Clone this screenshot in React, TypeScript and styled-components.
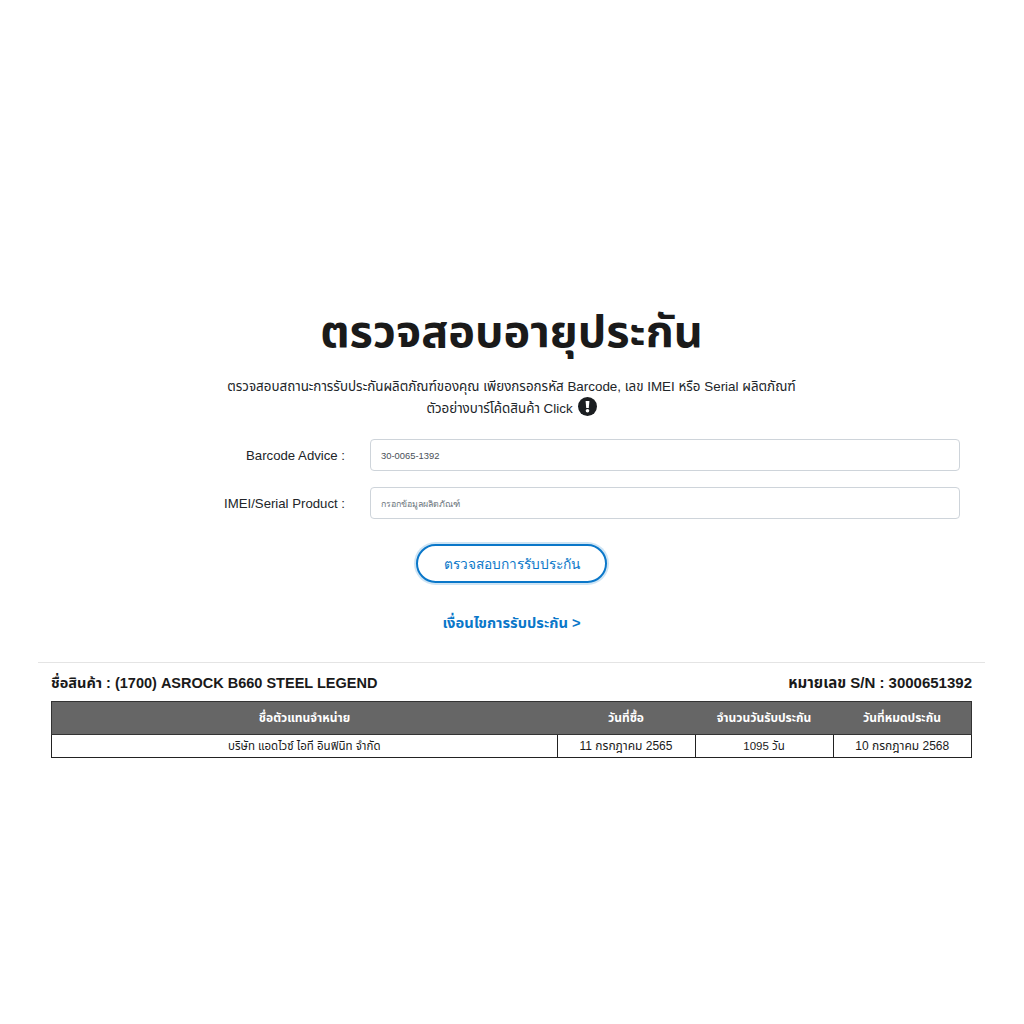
import React from 'react';
import styled, { createGlobalStyle } from 'styled-components';

const Global = createGlobalStyle`
  html, body { margin: 0; padding: 0; background: #fff; }
  body { font-family: "Liberation Sans", "Noto Sans", "Noto Sans Thai", sans-serif; color: #212529; }
`;

const Page = styled.div`
  width: 1024px;
  height: 1024px;
  padding: 302px 39px 0 38px;
  box-sizing: border-box;
`;

const Title = styled.h1`
  margin: 0;
  text-align: center;
  font-size: 45px;
  line-height: 60px;
  font-weight: 700;
  color: #1a1a1a;
`;

const Intro = styled.p`
  margin: 14px 0 0;
  text-align: center;
  font-size: 13.4px;
  line-height: 21.5px;
  color: #212529;
`;

const Hint = styled.span`
  display: inline-flex;
  align-items: center;
  gap: 4px;
`;

const InfoSvg = styled.svg`
  width: 19px;
  height: 19px;
  margin: -4px 0 0 1px;
`;

const Form = styled.form`
  margin-top: 20px;
  display: flex;
  flex-direction: column;
  gap: 16px;
`;

const Row = styled.div`
  display: grid;
  grid-template-columns: 307px 590px;
  column-gap: 25px;
  align-items: center;
`;

const Label = styled.label`
  text-align: right;
  font-size: 13.2px;
  color: #212529;
`;

const Input = styled.input`
  box-sizing: border-box;
  height: 32px;
  padding: 0 10px;
  border: 1px solid #ced4da;
  border-radius: 4px;
  font: 9.4px "Liberation Sans", sans-serif;
  color: #495057;
  &::placeholder { color: #6c757d; opacity: 1; font-size: 8.8px; }
`;

const Actions = styled.div`
  margin-top: 25px;
  display: flex;
  flex-direction: column;
  align-items: center;
`;

const CheckButton = styled.button`
  width: 191px;
  height: 39px;
  border: 2px solid #0a77c9;
  border-radius: 20px;
  background: #fff;
  box-shadow: 0 0 0 2px rgba(10, 119, 201, 0.2);
  color: #0a77c9;
  font: 13.7px "Liberation Sans", sans-serif;
`;

const TermsLink = styled.a`
  margin-top: 29px;
  font-size: 14.7px;
  font-weight: 700;
  line-height: 22px;
  color: #0a77c9;
`;

const Result = styled.section`
  margin-top: 28px;
  padding: 10px 13px 0;
  border-top: 1px solid #e4e4e4;
`;

const ResultHead = styled.div`
  display: flex;
  justify-content: space-between;
  font-size: 14.5px;
  font-weight: 700;
  line-height: 20px;
  color: #1a1a1a;
`;

const SerialNo = styled.span`
  font-size: 15px;
`;

const Table = styled.table`
  margin-top: 8px;
  width: 921px;
  table-layout: fixed;
  border-collapse: collapse;
`;

const Th = styled.th<{ $width?: number }>`
  width: ${p => (p.$width ? `${p.$width}px` : 'auto')};
  height: 32px;
  padding: 0;
  border: 1px solid #333;
  border-width: 1px 0 1px 0;
  background: #666;
  color: #fff;
  font-size: 12px;
  font-weight: 700;
  &:first-child { border-left: 1px solid #333; }
  &:last-child { border-right: 1px solid #333; }
`;

const Td = styled.td<{ $size: number }>`
  height: 22px;
  padding: 0;
  border: 1px solid #222;
  text-align: center;
  font-size: ${p => p.$size}px;
  line-height: 16px;
  color: #1a1a1a;
`;

const InfoIcon = () => (
  <InfoSvg viewBox="0 0 19 19" aria-hidden="true">
    <circle cx="9.5" cy="9.5" r="9.5" fill="#1b1e21" />
    <path d="M7.6 4h3.8l-.6 7h-2.6z" fill="#fff" />
    <circle cx="9.5" cy="13.7" r="1.8" fill="#fff" />
  </InfoSvg>
);

const columns = [
  { label: 'ชื่อตัวแทนจำหน่าย', value: 'บริษัท แอดไวซ์ ไอที อินฟินิท จำกัด', size: 11.5 },
  { label: 'วันที่ซื้อ', value: '11 กรกฎาคม 2565', width: 138, size: 12 },
  { label: 'จำนวนวันรับประกัน', value: '1095 วัน', width: 138, size: 11.5 },
  { label: 'วันที่หมดประกัน', value: '10 กรกฎาคม 2568', width: 138, size: 12 },
];

export default function App() {
  return (
    <Page>
      <Global />
      <Title>ตรวจสอบอายุประกัน</Title>
      <Intro>
        ตรวจสอบสถานะการรับประกันผลิตภัณฑ์ของคุณ เพียงกรอกรหัส Barcode, เลข IMEI หรือ Serial ผลิตภัณฑ์
        <br />
        <Hint>
          ตัวอย่างบาร์โค้ดสินค้า Click <InfoIcon />
        </Hint>
      </Intro>
      <Form>
        <Row>
          <Label>Barcode Advice :</Label>
          <Input defaultValue="30-0065-1392" />
        </Row>
        <Row>
          <Label>IMEI/Serial Product :</Label>
          <Input placeholder="กรอกข้อมูลผลิตภัณฑ์" />
        </Row>
      </Form>
      <Actions>
        <CheckButton type="button">ตรวจสอบการรับประกัน</CheckButton>
        <TermsLink>เงื่อนไขการรับประกัน &gt;</TermsLink>
      </Actions>
      <Result>
        <ResultHead>
          <span>ชื่อสินค้า : (1700) ASROCK B660 STEEL LEGEND</span>
          <SerialNo>หมายเลข S/N : 3000651392</SerialNo>
        </ResultHead>
        <Table>
          <thead>
            <tr>
              {columns.map(c => (
                <Th key={c.label} $width={c.width}>{c.label}</Th>
              ))}
            </tr>
          </thead>
          <tbody>
            <tr>
              {columns.map(c => (
                <Td key={c.label} $size={c.size}>{c.value}</Td>
              ))}
            </tr>
          </tbody>
        </Table>
      </Result>
    </Page>
  );
}
